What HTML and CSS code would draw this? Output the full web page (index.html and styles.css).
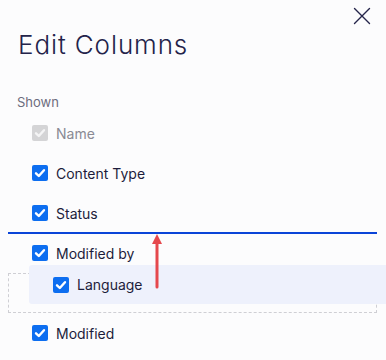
FILE: index.html
```html
<!DOCTYPE html>
<html lang="en">

<head>
	<meta charset="UTF-8">
	<meta name="viewport" content="width=device-width, initial-scale=1.0">
	<title>Edit Columns</title>
	<link rel="stylesheet" href="styles.css">
</head>

<body>
	<div class="panel">
		<button class="closeButton" title="Close">
			<svg width="18" height="18" viewBox="0 0 18 18">
				<path d="M1.5 1.5 L16.5 16.5 M16.5 1.5 L1.5 16.5" stroke="#25254a" stroke-width="1.4" fill="none" stroke-linecap="round" />
			</svg>
		</button>
		<h1 class="title">Edit Columns</h1>
		<div class="sectionLabel">Shown</div>
		<div class="list">
			<div class="row disabled">
				<span class="check"><svg viewBox="0 0 16 16"><path d="M4 8.3 L6.8 11 L12 5.2" /></svg></span>
				<span class="label">Name</span>
			</div>
			<div class="row">
				<span class="check"><svg viewBox="0 0 16 16"><path d="M4 8.3 L6.8 11 L12 5.2" /></svg></span>
				<span class="label">Content Type</span>
			</div>
			<div class="row dropAfter">
				<span class="check"><svg viewBox="0 0 16 16"><path d="M4 8.3 L6.8 11 L12 5.2" /></svg></span>
				<span class="label">Status</span>
			</div>
			<div class="row">
				<span class="check"><svg viewBox="0 0 16 16"><path d="M4 8.3 L6.8 11 L12 5.2" /></svg></span>
				<span class="label">Modified by</span>
			</div>
			<div class="placeholder">
				<div class="row dragging">
					<span class="check"><svg viewBox="0 0 16 16"><path d="M4 8.3 L6.8 11 L12 5.2" /></svg></span>
					<span class="label">Language</span>
				</div>
			</div>
			<div class="row">
				<span class="check"><svg viewBox="0 0 16 16"><path d="M4 8.3 L6.8 11 L12 5.2" /></svg></span>
				<span class="label">Modified</span>
			</div>
			<svg class="arrow" width="16" height="56" viewBox="0 0 16 56">
				<path d="M8 54 L8 10" stroke="#e5484d" stroke-width="3" stroke-linecap="round" fill="none" />
				<path d="M8 1 L3 11 L13 11 Z" fill="#e5484d" />
			</svg>
		</div>
	</div>
</body>

</html>
```

FILE: styles.css
```css
body,
html {
	margin: 0;
	padding: 0;
	height: 100%;
	overflow: hidden;
	background-color: #fcfcfd;
}

.panel {
	position: relative;
	padding: 0 9px 0 8px;
	font-family: Inter, "Noto Sans", sans-serif;
	color: #1d1d3b;
}

.closeButton {
	position: absolute;
	top: 7px;
	right: 15px;
	padding: 0;
	border: none;
	background: none;
	cursor: pointer;
	line-height: 0;
}

.title {
	margin: 0;
	padding: 29px 0 0 10px;
	font-size: 26px;
	font-weight: 300;
	letter-spacing: 0.9px;
	line-height: 32px;
	color: #23234a;
}

.sectionLabel {
	margin-top: 33px;
	padding-left: 9px;
	font-size: 13px;
	line-height: 16px;
	color: #6c6c7e;
}

.list {
	position: relative;
	margin-top: 3px;
}

.row {
	display: flex;
	align-items: center;
	gap: 8px;
	height: 40px;
	padding-left: 24px;
	box-sizing: border-box;
	font-size: 14px;
}

.check {
	display: flex;
	width: 16px;
	height: 16px;
	border-radius: 2px;
	background-color: #0d6ef0;
	flex: 0 0 auto;
}

.check svg {
	width: 16px;
	height: 16px;
}

.check path {
	fill: none;
	stroke: #fff;
	stroke-width: 2.4;
	stroke-linecap: round;
	stroke-linejoin: round;
}

.disabled .check {
	background-color: #d4d4d6;
}

.disabled .check path {
	stroke: #f4f4f5;
}

.disabled .label {
	color: #8a8a94;
}

.dropAfter {
	position: relative;
}

.dropAfter::after {
	content: "";
	position: absolute;
	left: 0;
	right: 0;
	bottom: -1px;
	height: 2px;
	background-color: #0a44d8;
}

.placeholder {
	position: relative;
	height: 40px;
	box-sizing: border-box;
	border: 1px dashed #cfcfd4;
}

.dragging {
	position: absolute;
	top: -9px;
	left: 20px;
	right: -10px;
	height: 39px;
	border-radius: 3px 0 0 3px;
	background-color: #eef1fc;
}

.arrow {
	position: absolute;
	left: 141px;
	top: 120px;
}
```
